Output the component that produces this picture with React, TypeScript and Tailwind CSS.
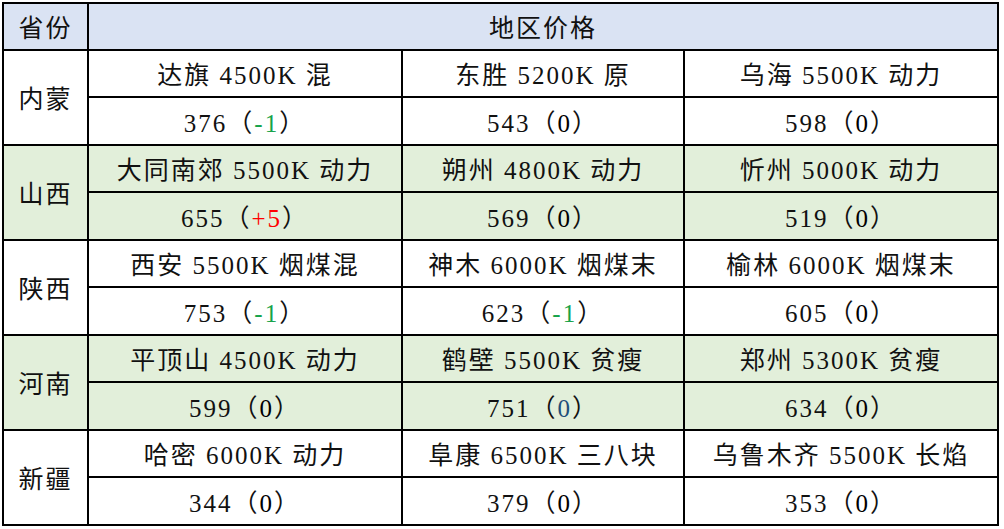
import React from 'react';

type Delta = { text: string; color: string };

type Cell = {
  name: string;
  price: string;
  delta: Delta;
};

type Province = {
  name: string;
  green: boolean;
  cells: Cell[];
};

const zero: Delta = { text: '0', color: 'text-black' };

const provinces: Province[] = [
  {
    name: '内蒙',
    green: false,
    cells: [
      { name: '达旗 4500K 混', price: '376', delta: { text: '-1', color: 'text-[#16a34a]' } },
      { name: '东胜 5200K 原', price: '543', delta: zero },
      { name: '乌海 5500K 动力', price: '598', delta: zero },
    ],
  },
  {
    name: '山西',
    green: true,
    cells: [
      { name: '大同南郊 5500K 动力', price: '655', delta: { text: '+5', color: 'text-[#ff0000]' } },
      { name: '朔州 4800K 动力', price: '569', delta: zero },
      { name: '忻州 5000K 动力', price: '519', delta: zero },
    ],
  },
  {
    name: '陕西',
    green: false,
    cells: [
      { name: '西安 5500K 烟煤混', price: '753', delta: { text: '-1', color: 'text-[#16a34a]' } },
      { name: '神木 6000K 烟煤末', price: '623', delta: { text: '-1', color: 'text-[#16a34a]' } },
      { name: '榆林 6000K 烟煤末', price: '605', delta: zero },
    ],
  },
  {
    name: '河南',
    green: true,
    cells: [
      { name: '平顶山 4500K 动力', price: '599', delta: zero },
      { name: '鹤壁 5500K 贫瘦', price: '751', delta: { text: '0', color: 'text-[#1f4e79]' } },
      { name: '郑州 5300K 贫瘦', price: '634', delta: zero },
    ],
  },
  {
    name: '新疆',
    green: false,
    cells: [
      { name: '哈密 6000K 动力', price: '344', delta: zero },
      { name: '阜康 6500K 三八块', price: '379', delta: zero },
      { name: '乌鲁木齐 5500K 长焰', price: '353', delta: zero },
    ],
  },
];

const cellBase =
  'flex items-center justify-center pt-[5px] border-r-2 border-b-2 border-black text-[25px] tracking-[2px] whitespace-nowrap';

const App: React.FC = () => {
  return (
    <div className="w-[1004px] h-[529px] bg-white pt-[2px] pl-[2px] text-[#111] font-['Liberation_Serif','Noto_Sans_CJK_SC',serif]">
      <div className="grid w-[997px] grid-cols-[85px_314px_282px_314px] border-t-2 border-l-2 border-black">
        <div className={`${cellBase} h-[47px] bg-[#dae3f3]`}>省份</div>
        <div className={`${cellBase} col-span-3 h-[47px] bg-[#dae3f3]`}>地区价格</div>

        {provinces.map((p) => {
          const bg = p.green ? 'bg-[#e2efda]' : 'bg-white';
          return (
            <React.Fragment key={p.name}>
              <div className={`${cellBase} row-span-2 ${bg}`}>{p.name}</div>
              {p.cells.map((c) => (
                <div key={c.name} className={`${cellBase} h-[47px] ${bg}`}>
                  {c.name}
                </div>
              ))}
              {p.cells.map((c) => (
                <div key={c.name + '-price'} className={`${cellBase} h-[48px] ${bg}`}>
                  {c.price}（<span className={c.delta.color}>{c.delta.text}</span>）
                </div>
              ))}
            </React.Fragment>
          );
        })}
      </div>
    </div>
  );
};

export default App;
